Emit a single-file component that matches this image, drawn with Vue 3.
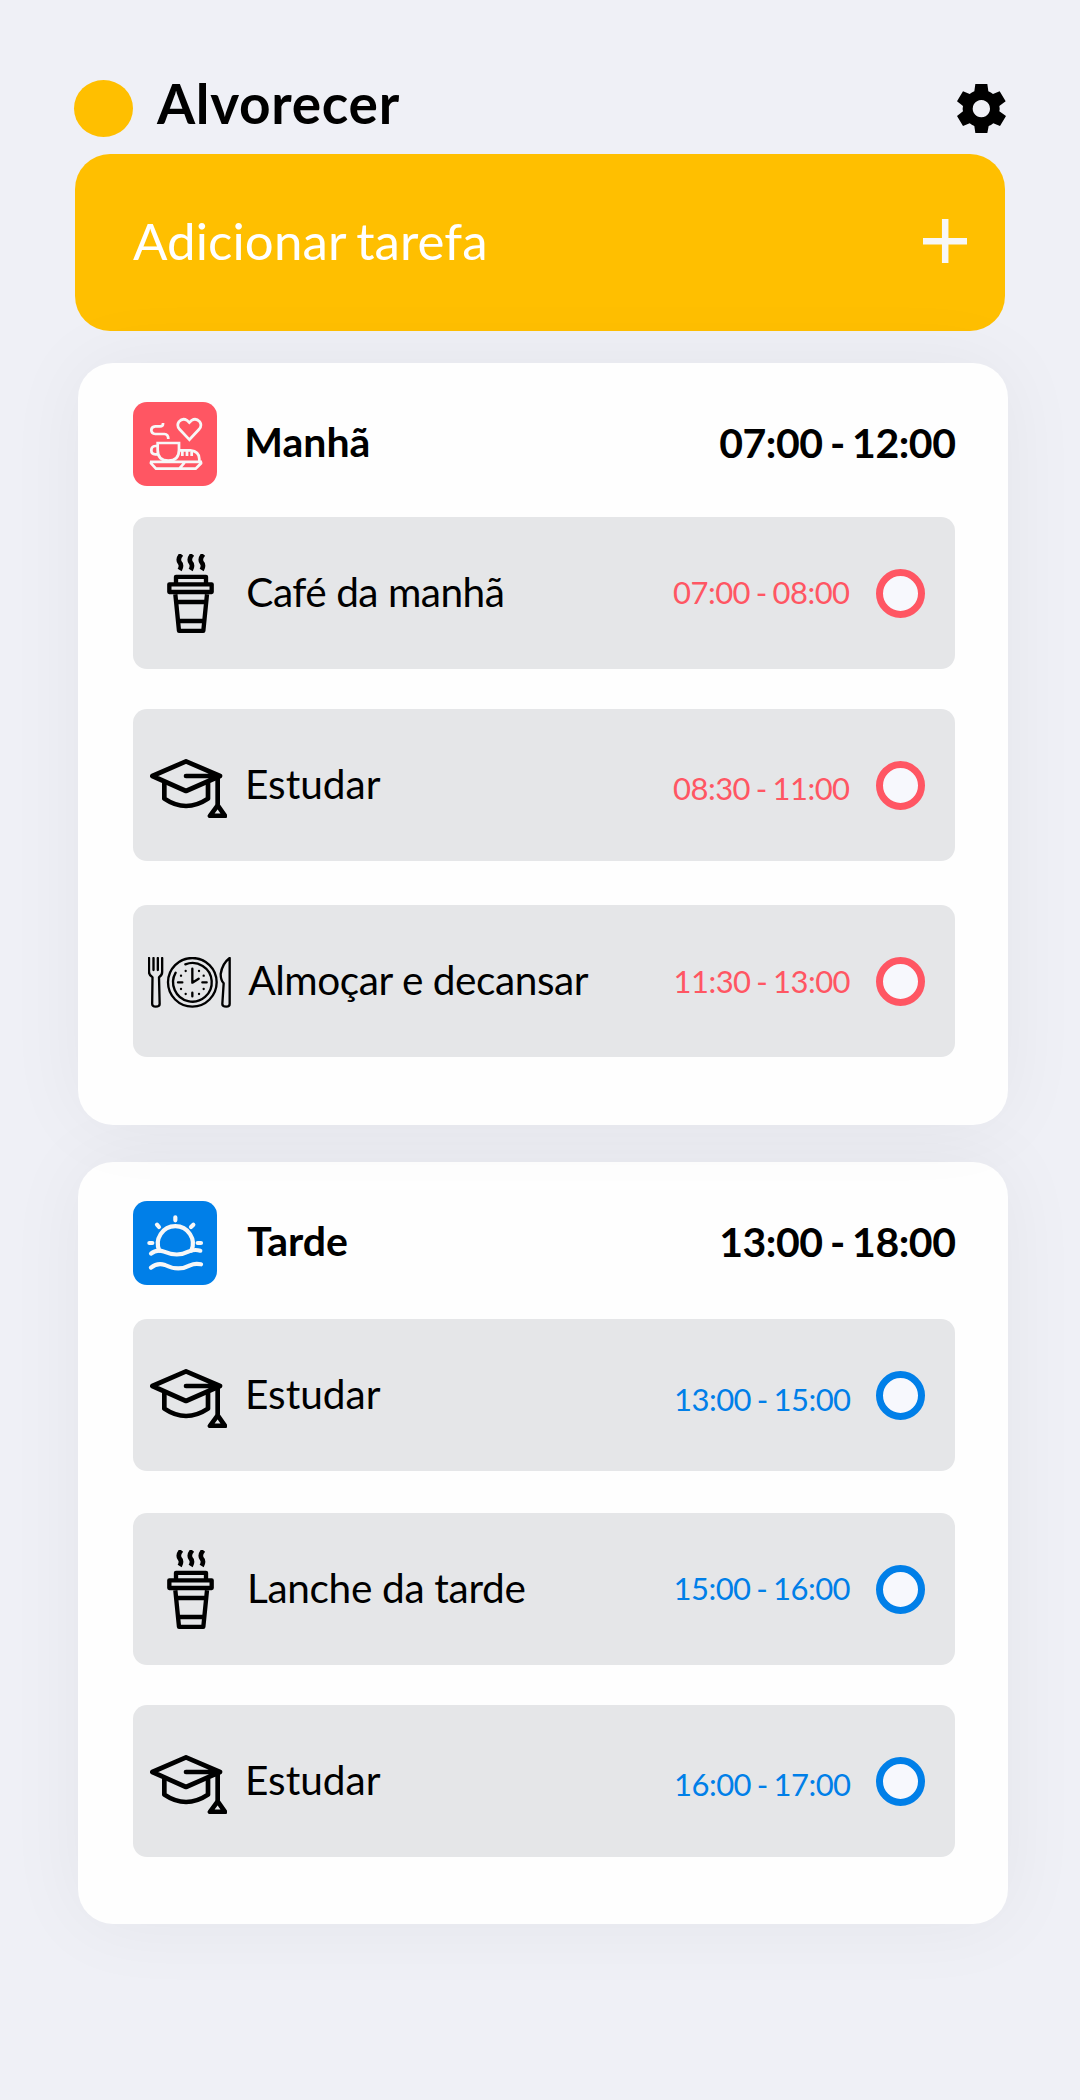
<script setup>
const periods = [
  {
    name: 'Manhã', hours: '07:00 - 12:00', tone: 'rose', icon: 'breakfast', x: 27.3,
    tasks: [
      { icon: 'coffee', label: 'Café da manhã', time: '07:00 - 08:00', x: 3, track: -0.5, end: 26.5, drop: -1.2, gap: 40 },
      { icon: 'cap', label: 'Estudar', time: '08:30 - 11:00', x: 1.7, track: 0, end: 26.5, drop: 2.7, gap: 44 },
      { icon: 'meal', label: 'Almoçar e decansar', time: '11:30 - 13:00', x: 5, track: -0.45, end: 26, drop: 0, gap: 0 },
    ],
  },
  {
    name: 'Tarde', hours: '13:00 - 18:00', tone: 'blue', icon: 'sunset', x: 30.2,
    tasks: [
      { icon: 'cap', label: 'Estudar', time: '13:00 - 15:00', x: 1.7, track: 0, end: 25.5, drop: 3.7, gap: 42 },
      { icon: 'coffee', label: 'Lanche da tarde', time: '15:00 - 16:00', x: 3.6, track: -0.33, end: 26, drop: -0.6, gap: 40 },
      { icon: 'cap', label: 'Estudar', time: '16:00 - 17:00', x: 1.7, track: 0, end: 25.5, drop: 3, gap: 0 },
    ],
  },
]
</script>

<template>
  <main class="screen">
    <header class="top">
      <span class="dot"></span>
      <h1>Alvorecer</h1>
      <svg class="gear" viewBox="0 0 147 147" aria-hidden="true">
        <path fill-rule="evenodd" d="M55 0H91L94 22Q102 25 108 30L128 22L146 52L127 66Q129 74 127 82L147 96L129 126L109 118Q102 124 95 126L91 147H55L52 126Q44 123 38 118L18 126L0 96L18 82Q16 74 18 66L0 52L18 22L38 30Q44 25 52 22ZM73 48a26 26 0 1 0 0.1 0Z" />
      </svg>
    </header>

    <button class="add" type="button">
      <span>Adicionar tarefa</span>
      <svg class="plus" viewBox="0 0 44 44" aria-hidden="true"><path d="M22.2 0V44M0 22.2H44" /></svg>
    </button>

    <section v-for="p in periods" :key="p.name" class="card" :class="p.tone">
      <div class="head">
        <span class="tile">
          <svg v-if="p.icon === 'breakfast'" viewBox="39 36 252 252" aria-hidden="true">
            <g class="line thin">
              <path d="M129 99V102Q129 109 120 109H106Q94 110 94 120Q94 131 106 132H133Q145 133 145 147" />
              <path d="M208 149L178 117Q169 106 177 95Q188 83 201 91L208 98L215 91Q228 83 239 95Q247 106 238 117Z" />
              <path d="M113 159H177V180Q177 212 145 212Q113 212 113 180Z" />
              <path d="M113 168H106Q94 169 94 181Q94 193 106 193H116" />
              <path d="M177 181H211Q238 184 238 207V214M187 182V198M201 182V198M215 182V198" />
              <path d="M90 215.500H246M93 215V220L108 236H227L243 220V215M192 215V220L178 236" />
            </g>
          </svg>
          <svg v-else viewBox="219 363 252 252" aria-hidden="true">
            <g class="line round">
              <path d="M298 512A52.500 52.500 0 1 1 394 512" />
              <path d="M346 412V421M291 434L297 441M400 434L393 441M268 489H277M413 489H423" />
              <path d="M273 521Q290 506 312 515Q352 532 385 515Q402 507 421 512" />
              <path d="M273 563Q292 547 315 555Q355 575 390 556Q405 549 423 553" />
            </g>
          </svg>
        </span>
        <h2 :style="{ marginLeft: p.x + 'px' }">{{ p.name }}</h2>
        <span class="hours">{{ p.hours }}</span>
      </div>

      <ul>
        <li v-for="t in p.tasks" :key="t.time" :style="{ marginBottom: t.gap + 'px' }">
          <span class="pic">
            <svg v-if="t.icon === 'coffee'" class="coffee" viewBox="0 0 141 237" aria-hidden="true">
              <path class="steam" d="M43 1Q31 15 38 25Q46 34 38 48M76 1Q64 15 71 25Q79 34 71 48M109 1Q97 15 104 25Q112 34 104 48" />
              <path d="M27 88V68.500H117V88" />
              <path d="M7 91H134V114H7Z" />
              <path d="M25 121L36 230.500H109L120 121M29 144H117M34 201H111" />
            </svg>
            <svg v-else-if="t.icon === 'cap'" class="cap" viewBox="90 180 231 177" aria-hidden="true">
              <path d="M198 187L300 231L198 276L97 231ZM198 231H293V315" />
              <path d="M133 252V299Q198 343 264 299V252M293 319L270 350.500H315Z" />
            </svg>
            <svg v-else class="meal" viewBox="84 171 249 153" aria-hidden="true">
              <path d="M87 174V216Q87 226 97.500 232L96.500 312Q97 320 107 320Q119 320 119 312L117 232Q126.500 226 126.500 216V174M100.500 174V210M113.500 174V210" />
              <circle cx="217" cy="247" r="73" />
              <path d="M196 193A58 58 0 1 1 167 218" />
              <path d="M217 206V248L236 236M217 278V289M174 247H187M247 247H260M197 213h.1M237 213h.1M183 227h.1M251 227h.1M183 267h.1M251 267h.1M197 282h.1M237 282h.1" />
              <path d="M329 174V312Q329 320 319 320Q307 320 307 312L311 250Q302 240 302 222Q307 190 329 174Z" />
            </svg>
          </span>
          <span class="label" :style="{ marginLeft: t.x + 'px', letterSpacing: t.track + 'px' }">{{ t.label }}</span>
          <time :style="{ marginRight: t.end + 'px', marginTop: 2 * t.drop + 'px' }">{{ t.time }}</time>
          <span class="ring"></span>
        </li>
      </ul>
    </section>
  </main>
</template>

<style>
body { background: #eff0f6; }
</style>

<style scoped>
.screen {
  box-sizing: border-box;
  width: 1080px;
  height: 2100px;
  padding: 80px 72px 0 78px;
  overflow: hidden;
  background: #eff0f6;
  color: #000;
  font-family: Lato, sans-serif;
}
.top {
  display: flex;
  height: 74px;
  margin: 0 2px 0 -4px;
}
.dot {
  width: 59px;
  height: 57px;
  border-radius: 50%;
  background: #ffbf00;
}
h1 {
  margin: 0 auto 0 24px;
  font-size: 55px;
  line-height: 47px;
  font-weight: 700;
  letter-spacing: 0.7px;
}
.gear { width: 49px; height: 49px; margin-top: 4px; }
.add {
  display: flex;
  align-items: center;
  justify-content: space-between;
  box-sizing: border-box;
  width: 930px;
  height: 177px;
  margin: 0 0 32px -3px;
  padding: 0 38px 0 58px;
  border: 0;
  border-radius: 35px;
  background: #ffbf00;
  color: #fff;
  font: 400 51px/60px Lato, sans-serif;
  letter-spacing: 0.1px;
  word-spacing: -2.5px;
}
.add span { margin-top: -3px; }
.plus {
  width: 44px;
  height: 44px;
  margin-top: -3px;
  stroke: #f7f7f7;
  stroke-width: 6.5;
}
.card {
  position: relative;
  box-sizing: border-box;
  width: 930px;
  height: 762px;
  margin-bottom: 37px;
  padding: 39px 53px 0 55px;
  border-radius: 35px;
  background: #fefefe;
  box-shadow: 0 0 80px rgba(0, 0, 0, 0.05);
}
.rose { --tone: #ff5663; z-index: 2; }
.blue { --tone: #007fe8; z-index: 1; }
.head {
  display: flex;
  align-items: center;
  height: 84px;
  margin-bottom: 31px;
}
.blue .head { margin-bottom: 34px; }
.tile {
  width: 84px;
  height: 84px;
  border-radius: 14px;
  background: var(--tone);
}
.tile svg { display: block; width: 84px; height: 84px; }
.line { fill: none; stroke: #f7f7f7; }
.thin { stroke-width: 8.2; }
.round { stroke-width: 12.5; stroke-linecap: round; }
h2, .hours {
  margin: 0;
  font-size: 41px;
  line-height: 50px;
  font-weight: 700;
}
h2 { margin-top: -4px; }
.hours {
  margin: -3px -0.5px 0 auto;
  letter-spacing: -0.45px;
  word-spacing: -2.2px;
}
ul { margin: 0; padding: 0; list-style: none; }
li {
  display: flex;
  align-items: center;
  box-sizing: border-box;
  height: 152px;
  padding-right: 30px;
  border-radius: 14px;
  background: #e5e6e8;
}
.pic { display: flex; width: 110.300px; flex: none; }
.pic svg {
  fill: none;
  stroke: #000;
  stroke-width: 13;
  stroke-linejoin: round;
  stroke-linecap: round;
}
.pic .coffee { width: 47px; height: 79px; margin-left: 34px; stroke-linecap: butt; }
.pic .steam { stroke-width: 14; }
.pic .cap { width: 77px; height: 59px; margin: 7px 0 0 17px; stroke-width: 14; }
.pic .meal { width: 83px; height: 51px; margin: 2px 0 0 15px; stroke-width: 7; }
.label {
  margin-top: -2.5px;
  font-size: 40.600px;
  line-height: 50px;
  white-space: nowrap;
}
time {
  margin-left: auto;
  color: var(--tone);
  font-size: 31px;
  line-height: 38px;
  letter-spacing: -0.55px;
  word-spacing: -1.600px;
  white-space: nowrap;
}
.ring {
  box-sizing: border-box;
  width: 49px;
  height: 49px;
  margin-top: 1px;
  border: 7px solid var(--tone);
  border-radius: 50%;
  background: #f7f8fd;
}
</style>
